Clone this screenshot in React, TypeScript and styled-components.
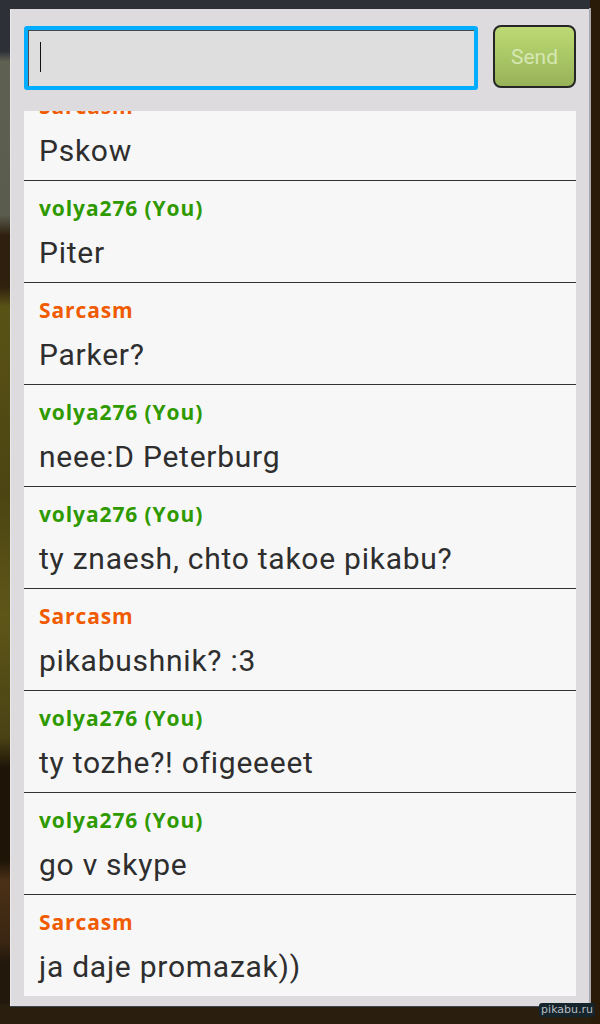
import styled, { createGlobalStyle } from "styled-components";

type Message = {
  author: string;
  mine?: boolean;
  text: string;
};

const messages: Message[] = [
  { author: "Sarcasm", text: "Pskow" },
  { author: "volya276 (You)", mine: true, text: "Piter" },
  { author: "Sarcasm", text: "Parker?" },
  { author: "volya276 (You)", mine: true, text: "neee:D Peterburg" },
  { author: "volya276 (You)", mine: true, text: "ty znaesh, chto takoe pikabu?" },
  { author: "Sarcasm", text: "pikabushnik? :3" },
  { author: "volya276 (You)", mine: true, text: "ty tozhe?! ofigeeeet" },
  { author: "volya276 (You)", mine: true, text: "go v skype" },
  { author: "Sarcasm", text: "ja daje promazak))" },
];

const GlobalStyle = createGlobalStyle`
  html, body {
    margin: 0;
    padding: 0;
    background: #24180a;
  }
  * {
    box-sizing: border-box;
  }
`;

// game screen peeking out behind the chat dialog
const Backdrop = styled.div`
  position: relative;
  width: 600px;
  height: 1024px;
  padding: 8px 11px 17px 10px;
  background:
    linear-gradient(90deg, transparent 0, transparent 590px, #2a1a08 590px),
    linear-gradient(180deg, transparent 0, transparent 1004px, #2a1e0e 1004px),
    linear-gradient(
      180deg,
      #2e3038 0%,
      #2e3038 5%,
      #5e6052 6%,
      #5a5c4e 21%,
      #2e1f0e 23%,
      #30200e 28%,
      #5a5316 30%,
      #4c4412 48%,
      #5e5618 60%,
      #4a4214 72%,
      #1e1408 75%,
      #1e1408 84%,
      #4a3016 86%,
      #3a2612 92%,
      #22180c 94%,
      #22180c 100%
    );
`;

const Panel = styled.div`
  display: flex;
  flex-direction: column;
  height: 100%;
  padding: 16px 13px 10px 14px;
  background: #dddbde;
  border-top: 1px solid #2c2f36;
  border-bottom: 1px solid #3a4656;
  box-shadow: inset 1px 0 0 #ebeaec, 2px 0 0 #a9a8ac;
`;

const Composer = styled.div`
  display: flex;
  align-items: flex-start;
  gap: 15px;
  height: 86px;
`;

const InputBox = styled.div`
  position: relative;
  flex: 1;
  height: 64px;
  margin-top: 1px;
  border: 4px solid #00adff;
  border-radius: 3px;
  background: #dfdedf;
  box-shadow: inset 1px 1px 0 #4a4a4a;
`;

const Caret = styled.span`
  position: absolute;
  left: 12px;
  top: 12px;
  width: 1px;
  height: 30px;
  background: #111;
`;

const SendButton = styled.button`
  width: 83px;
  height: 63px;
  border: 2px solid #262626;
  border-radius: 8px;
  background: linear-gradient(180deg, #bcd974 0%, #aac766 50%, #97b258 100%);
  color: #d6e7b4;
  font-family: Roboto, "Liberation Sans", sans-serif;
  font-size: 21px;
  padding: 0;
`;

const List = styled.div`
  flex: 1;
  display: flex;
  flex-direction: column;
  justify-content: flex-end;
  overflow: hidden;
  background: #f7f7f7;
`;

const Row = styled.div<{ $last?: boolean }>`
  flex: none;
  height: ${(p) => (p.$last ? "101px" : "102px")};
  padding: 14px 15px 0;
  border-bottom: ${(p) => (p.$last ? "none" : "1px solid #333")};
`;

const Author = styled.div<{ $mine?: boolean }>`
  font-family: "Open Sans", "DejaVu Sans", sans-serif;
  font-weight: 700;
  font-size: 21px;
  line-height: 26px;
  letter-spacing: 0.9px;
  color: ${(p) => (p.$mine ? "#2f9a00" : "#f05a00")};
`;

const Text = styled.div`
  margin-top: 14px;
  font-family: Roboto, "Liberation Sans", sans-serif;
  font-size: 30px;
  line-height: 36px;
  letter-spacing: 0.75px;
  color: #2e2e2e;
  white-space: nowrap;
`;

const Watermark = styled.span`
  position: absolute;
  right: 5px;
  bottom: 7px;
  padding: 0 2px;
  border-radius: 3px;
  background: #16242c;
  color: #b8bcc0;
  font-family: "DejaVu Sans", sans-serif;
  font-size: 11px;
  line-height: 14px;
`;

export default function App() {
  return (
    <>
      <GlobalStyle />
      <Backdrop>
        <Panel>
          <Composer>
            <InputBox>
              <Caret />
            </InputBox>
            <SendButton>Send</SendButton>
          </Composer>
          <List>
            {messages.map((m, i) => (
              <Row key={i} $last={i === messages.length - 1}>
                <Author $mine={m.mine}>{m.author}</Author>
                <Text>{m.text}</Text>
              </Row>
            ))}
          </List>
        </Panel>
        <Watermark>pikabu.ru</Watermark>
      </Backdrop>
    </>
  );
}
